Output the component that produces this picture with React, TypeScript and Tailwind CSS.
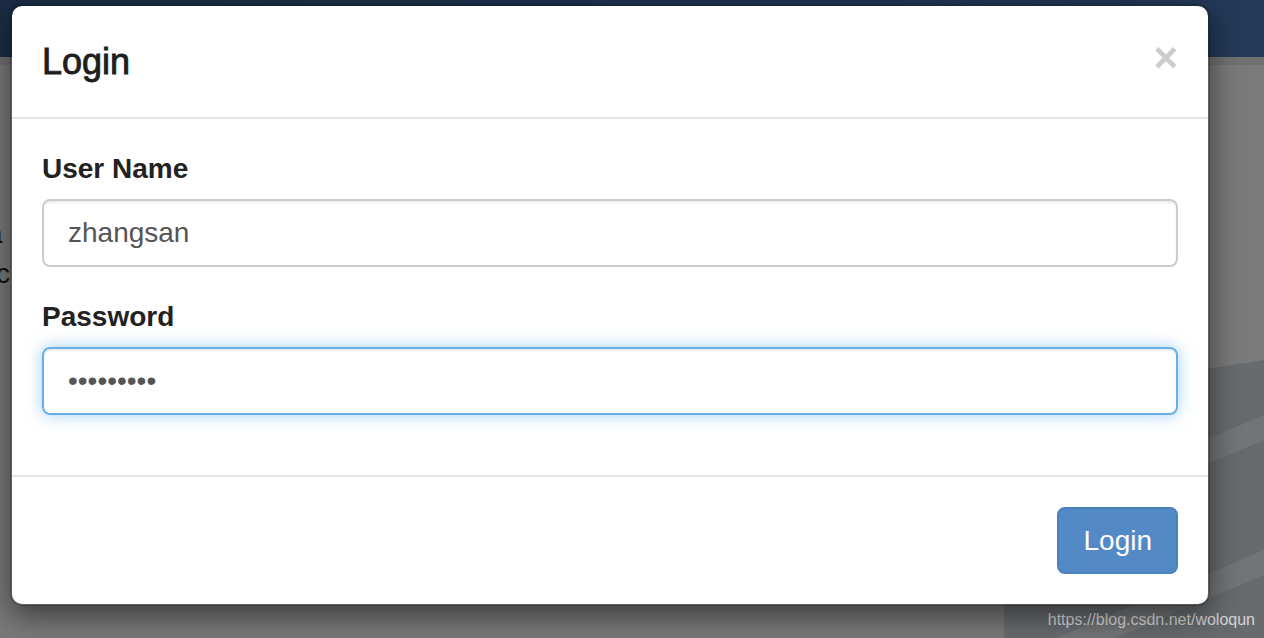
import React from 'react';

const App = () => {
  return (
    <div className="relative h-[638px] w-full overflow-hidden bg-[#7a7a7a] font-['Liberation_Sans',Arial,sans-serif]">
      {/* page behind the backdrop */}
      <div className="h-[57px] bg-gradient-to-r from-[#1b2d45] to-[#243a58]"></div>
      <div className="h-[8px] bg-[#717171]"></div>
      <div className="mt-[149px] text-[28px] leading-[40px] text-[#111]">
        <div className="-ml-[13px]">a</div>
        <div className="-ml-[4px]">c</div>
      </div>

      {/* light streaks bottom right */}
      <svg className="absolute right-0 top-[340px]" width="260" height="298" viewBox="0 0 260 298">
        <polygon points="0,60 260,20 260,298 0,298" fill="#686b6e" />
        <polygon points="0,185 260,75 260,100 0,210" fill="#727476" />
        <polygon points="0,320 260,210 260,235 0,345" fill="#727476" />
      </svg>

      <div className="absolute bottom-[8px] right-[9px] text-[16px] leading-[20px] text-[#d6d6d6]">
        https://blog.csdn.net/woloqun
      </div>

      {/* modal */}
      <div className="absolute inset-0 pl-[10px] pt-[4px]">
        <div className="w-[1200px] rounded-[12px] border-2 border-black/20 bg-white bg-clip-padding shadow-[0_10px_30px_rgba(0,0,0,0.5)]">
          <div className="flex items-start justify-between border-b-2 border-[#e5e5e5] p-[30px]">
            <h4 className="text-[36px] font-normal leading-[51px] text-[#1e1e1e] [-webkit-text-stroke:0.9px_#1e1e1e]">Login</h4>
            <button className="mt-[1px] text-[42px] font-bold leading-[42px] text-[#cccccc]">×</button>
          </div>

          <div className="px-[30px] pt-[30px] pb-[30px]">
            <div className="mb-[30px]">
              <label className="mb-[10px] block text-[28px] font-bold leading-[40px] text-[#222]">User Name</label>
              <input
                type="text"
                defaultValue="zhangsan"
                className="block h-[68px] w-full rounded-[8px] border-2 border-[#cccccc] px-[24px] text-[28px] text-[#555] shadow-[inset_0_2px_2px_rgba(0,0,0,0.075)] outline-none"
              />
            </div>
            <div className="mb-[30px]">
              <label className="mb-[10px] block text-[28px] font-bold leading-[40px] text-[#222]">Password</label>
              <input
                type="password"
                defaultValue="123456789"
                className="block h-[68px] w-full rounded-[8px] border-2 border-[#66afe9] px-[24px] text-[28px] text-[#555] shadow-[inset_0_2px_2px_rgba(0,0,0,0.075),0_0_16px_rgba(102,175,233,0.6)] outline-none"
              />
            </div>
          </div>

          <div className="flex justify-end border-t-2 border-[#e5e5e5] px-[30px] pt-[30px] pb-[30px]">
            <button className="h-[67px] rounded-[8px] border-2 border-[#4a7fc0] bg-[#5489c8] px-[24px] text-[28px] leading-[40px] text-white">
              Login
            </button>
          </div>
        </div>
      </div>
    </div>
  );
};

export default App;
